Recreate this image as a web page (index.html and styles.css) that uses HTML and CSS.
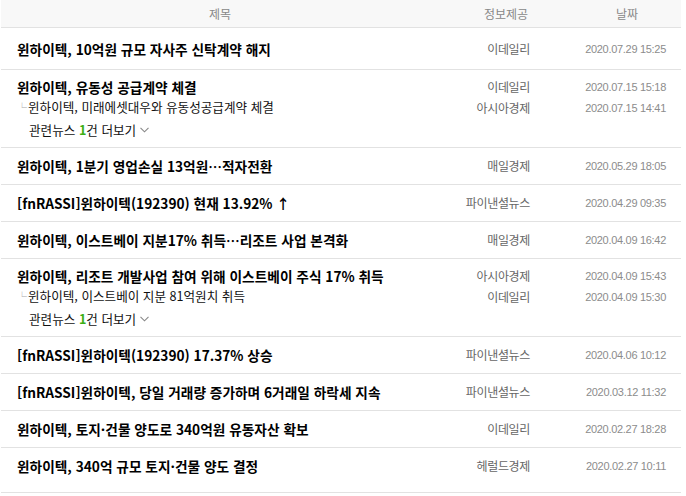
FILE: index.html
```html
<!DOCTYPE html>
<html lang="ko">
<head>
<meta charset="utf-8">
<link rel="stylesheet" href="styles.css">
</head>
<body>
<div class="news">
  <div class="head grid">
    <div class="h-title">제목</div>
    <div class="h-src">정보제공</div>
    <div class="h-date">날짜</div>
  </div>

  <div class="row first">
    <div class="grid line">
      <div class="title">윈하이텍, 10억원 규모 자사주 신탁계약 해지</div>
      <div class="src">이데일리</div>
      <div class="date">2020.07.29 15:25</div>
    </div>
  </div>

  <div class="row multi">
    <div class="grid line">
      <div class="title">윈하이텍, 유동성 공급계약 체결</div>
      <div class="src">이데일리</div>
      <div class="date">2020.07.15 15:18</div>
    </div>
    <div class="grid sub">
      <div class="sub-title"><span class="corner">└</span>윈하이텍, 미래에셋대우와 유동성공급계약 체결</div>
      <div class="src">아시아경제</div>
      <div class="date">2020.07.15 14:41</div>
    </div>
    <div class="more">관련뉴스 <span class="num">1</span>건 더보기 <svg class="chev" width="9" height="6" viewBox="0 0 9 6"><path d="M0.5 0.8 L4.5 4.8 L8.5 0.8" fill="none" stroke="#888" stroke-width="1.1"/></svg></div>
  </div>

  <div class="row">
    <div class="grid line">
      <div class="title">윈하이텍, 1분기 영업손실 13억원…적자전환</div>
      <div class="src">매일경제</div>
      <div class="date">2020.05.29 18:05</div>
    </div>
  </div>

  <div class="row">
    <div class="grid line">
      <div class="title">[fnRASSI]윈하이텍(192390) 현재 13.92% ↑</div>
      <div class="src">파이낸셜뉴스</div>
      <div class="date">2020.04.29 09:35</div>
    </div>
  </div>

  <div class="row">
    <div class="grid line">
      <div class="title">윈하이텍, 이스트베이 지분17% 취득…리조트 사업 본격화</div>
      <div class="src">매일경제</div>
      <div class="date">2020.04.09 16:42</div>
    </div>
  </div>

  <div class="row multi">
    <div class="grid line">
      <div class="title">윈하이텍, 리조트 개발사업 참여 위해 이스트베이 주식 17% 취득</div>
      <div class="src">아시아경제</div>
      <div class="date">2020.04.09 15:43</div>
    </div>
    <div class="grid sub">
      <div class="sub-title"><span class="corner">└</span>윈하이텍, 이스트베이 지분 81억원치 취득</div>
      <div class="src">이데일리</div>
      <div class="date">2020.04.09 15:30</div>
    </div>
    <div class="more">관련뉴스 <span class="num">1</span>건 더보기 <svg class="chev" width="9" height="6" viewBox="0 0 9 6"><path d="M0.5 0.8 L4.5 4.8 L8.5 0.8" fill="none" stroke="#888" stroke-width="1.1"/></svg></div>
  </div>

  <div class="row">
    <div class="grid line">
      <div class="title">[fnRASSI]윈하이텍(192390) 17.37% 상승</div>
      <div class="src">파이낸셜뉴스</div>
      <div class="date">2020.04.06 10:12</div>
    </div>
  </div>

  <div class="row">
    <div class="grid line">
      <div class="title">[fnRASSI]윈하이텍, 당일 거래량 증가하며 6거래일 하락세 지속</div>
      <div class="src">파이낸셜뉴스</div>
      <div class="date">2020.03.12 11:32</div>
    </div>
  </div>

  <div class="row">
    <div class="grid line">
      <div class="title">윈하이텍, 토지·건물 양도로 340억원 유동자산 확보</div>
      <div class="src">이데일리</div>
      <div class="date">2020.02.27 18:28</div>
    </div>
  </div>

  <div class="row last">
    <div class="grid line">
      <div class="title">윈하이텍, 340억 규모 토지·건물 양도 결정</div>
      <div class="src">헤럴드경제</div>
      <div class="date">2020.02.27 10:11</div>
    </div>
  </div>
</div>
</body>
</html>
```

FILE: styles.css
```css
html, body {
  margin: 0;
  padding: 0;
  background: #fff;
}

body {
  font-family: "Noto Sans CJK KR", "Noto Sans", sans-serif;
  color: #000;
}

.news {
  width: 680px;
  margin-left: 1px;
}

.grid {
  display: grid;
  grid-template-columns: 438px 134px 108px;
  align-items: center;
}

.head {
  height: 27px;
  background: #f8f8f8;
  border-bottom: 1px solid #e2e2e2;
  font-size: 12px;
  color: #888;
  line-height: 27px;
  text-align: center;
}

.row {
  border-bottom: 1px solid #e2e2e2;
  padding: 10px 0;
}

.row.first {
  padding: 13px 0 12px;
}

.row.last {
  padding-bottom: 18px;
}

.row.multi {
  padding: 9px 0 7px;
}

.line {
  height: 16px;
}

.title {
  padding-left: 16px;
  font-size: 13.7px;
  font-weight: bold;
  line-height: 16px;
  white-space: nowrap;
}

.src {
  text-align: right;
  padding-right: 43px;
  font-size: 12px;
  color: #666;
  letter-spacing: -0.35px;
  line-height: 16px;
}

.date {
  text-align: right;
  padding-right: 15px;
  font-family: "Liberation Sans", Arial, sans-serif;
  font-size: 11px;
  letter-spacing: -0.3px;
  color: #8c8c8c;
  line-height: 16px;
}

.sub {
  height: 20px;
  margin-top: 2px;
}

.sub-title {
  padding-left: 16px;
  font-size: 12.6px;
  line-height: 20px;
  color: #111;
  white-space: nowrap;
}

.corner {
  color: #aaa;
  font-size: 10px;
  margin-right: 1px;
}

.more {
  height: 20px;
  margin-top: 3px;
  padding-left: 28px;
  font-size: 12.6px;
  line-height: 20px;
  color: #111;
  display: flex;
  align-items: center;
  white-space: pre;
}

.num {
  color: #3cae13;
  font-weight: bold;
}

.chev {
  margin-left: 0;
}
```
